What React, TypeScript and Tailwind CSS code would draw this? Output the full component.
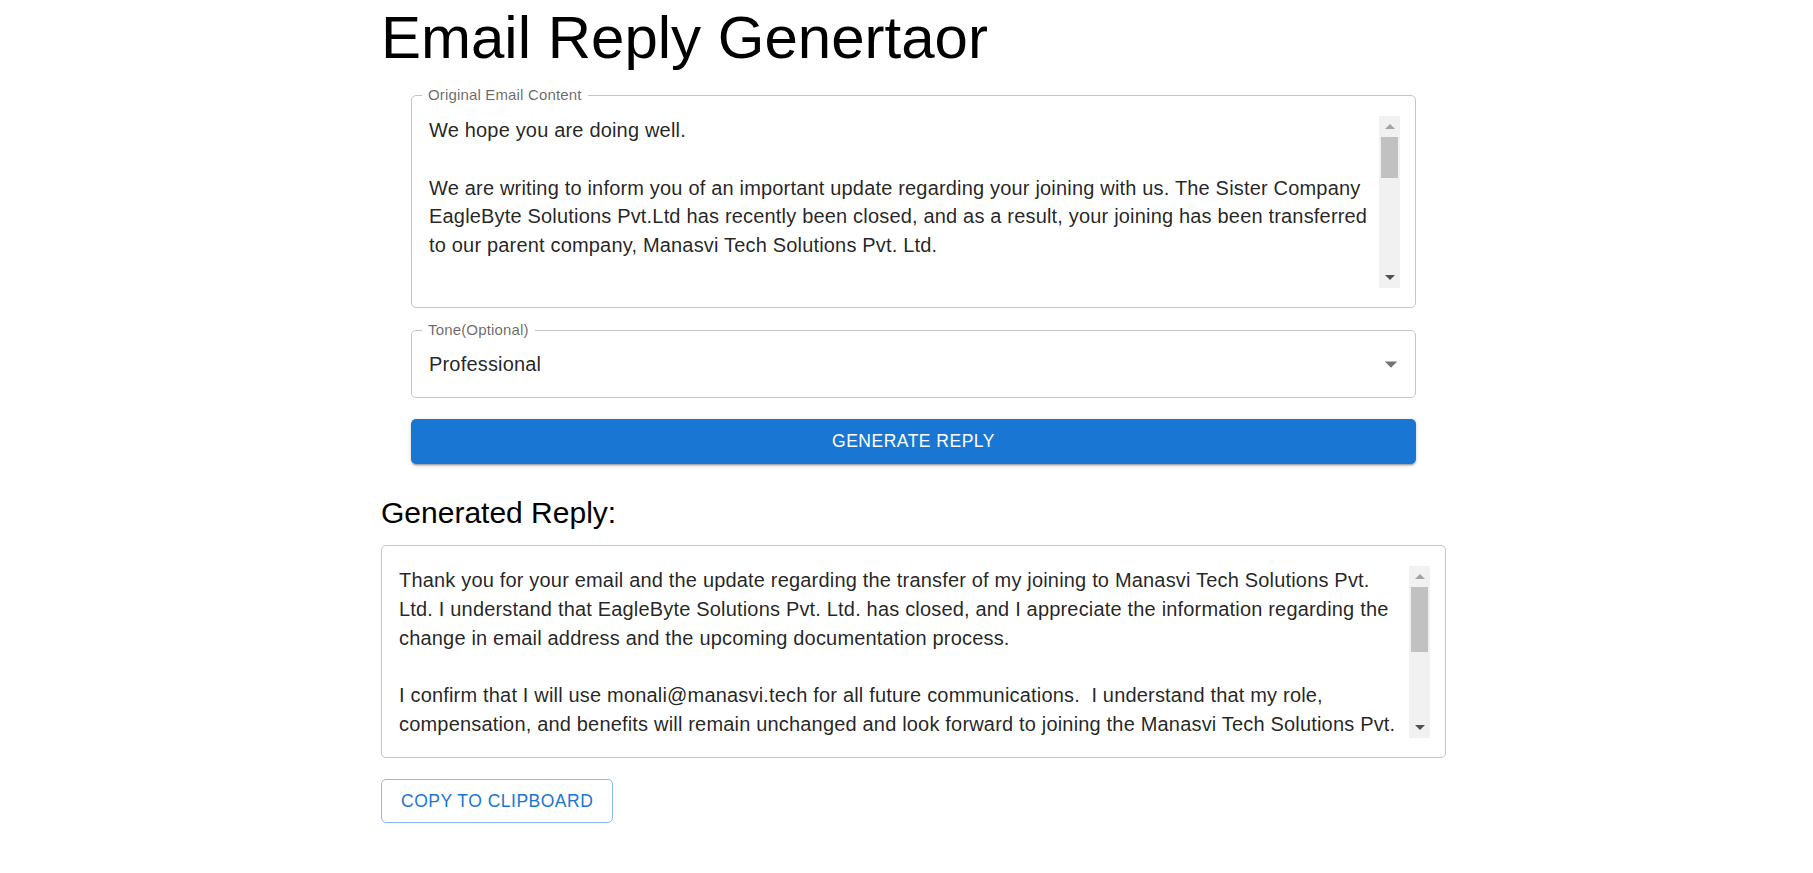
import React from "react";

function ScrollBar({ thumb }: { thumb: number }) {
  return (
    <div className="flex h-[172px] w-[21px] shrink-0 flex-col bg-[#f1f1f1]">
      <div className="flex h-[21px] items-center justify-center">
        <svg width="10" height="5" viewBox="0 0 10 5">
          <polygon points="0,5 5,0 10,5" fill="#a3a3a3" />
        </svg>
      </div>
      <div className="mx-[2px] bg-[#c1c1c1]" style={{ height: thumb }} />
      <div className="flex-1" />
      <div className="flex h-[21px] items-center justify-center">
        <svg width="10" height="5" viewBox="0 0 10 5">
          <polygon points="0,0 10,0 5,5" fill="#505050" />
        </svg>
      </div>
    </div>
  );
}

function FieldLabel({ text }: { text: string }) {
  return (
    <span className="absolute left-[10px] top-[-10px] bg-white px-[6px] text-[15px] leading-[18px] tracking-[0.16px] text-[rgba(0,0,0,0.6)]">
      {text}
    </span>
  );
}

function TextBox({
  lines,
  label,
  thumb,
}: {
  lines: string[];
  label?: string;
  thumb: number;
}) {
  return (
    <div className="relative flex h-[213px] rounded-[5px] border border-[#c4c4c4] pb-[19px] pl-[17px] pr-[15px] pt-[20px]">
      {label && <FieldLabel text={label} />}
      <div className="h-[172px] flex-1 overflow-hidden text-[20px] leading-[28.75px] tracking-[0.18px] text-[rgba(0,0,0,0.87)]">
        {lines.map((l, i) => (
          <div key={i} className="h-[28.75px] whitespace-pre">
            {l}
          </div>
        ))}
      </div>
      <ScrollBar thumb={thumb} />
    </div>
  );
}

export default function App() {
  const original = [
    "We hope you are doing well.",
    "",
    "We are writing to inform you of an important update regarding your joining with us. The Sister Company",
    "EagleByte Solutions Pvt.Ltd has recently been closed, and as a result, your joining has been transferred",
    "to our parent company, Manasvi Tech Solutions Pvt. Ltd.",
    "",
  ];
  const reply = [
    "Thank you for your email and the update regarding the transfer of my joining to Manasvi Tech Solutions Pvt.",
    "Ltd. I understand that EagleByte Solutions Pvt. Ltd. has closed, and I appreciate the information regarding the",
    "change in email address and the upcoming documentation process.",
    "",
    "I confirm that I will use monali@manasvi.tech for all future communications.  I understand that my role,",
    "compensation, and benefits will remain unchanged and look forward to joining the Manasvi Tech Solutions Pvt.",
  ];
  return (
    <div className="min-h-[873px] bg-white font-['Liberation_Sans',Arial,sans-serif]">
      <div className="ml-[381px] flex w-[1065px] flex-col pb-[40px]">
        <h1 className="mt-[3px] h-[70px] text-[60px] font-normal leading-[70px] text-black">
          Email Reply Genertaor
        </h1>
        <div className="mx-[30px] flex flex-col">
          <div className="mt-[22px]">
            <TextBox lines={original} label="Original Email Content" thumb={41} />
          </div>
          <div className="relative mt-[22px] flex h-[68px] items-center rounded-[5px] border border-[#c4c4c4] pl-[17px] pr-[9px]">
            <FieldLabel text="Tone(Optional)" />
            <span className="flex-1 text-[20px] leading-[28.75px] tracking-[0.18px] text-[rgba(0,0,0,0.87)]">
              Professional
            </span>
            <svg width="30" height="30" viewBox="0 0 24 24">
              <path d="M7 10l5 5 5-5z" fill="rgba(0,0,0,0.54)" />
            </svg>
          </div>
          <button className="mt-[21px] flex h-[45px] items-center justify-center rounded-[5px] bg-[#1976d2] text-[17.5px] uppercase tracking-[0.5px] text-white shadow-[0px_3px_1px_-2px_rgba(0,0,0,0.2),0px_2px_2px_0px_rgba(0,0,0,0.14),0px_1px_5px_0px_rgba(0,0,0,0.12)]">
            Generate Reply
          </button>
        </div>
        <h5 className="mt-[29px] h-[40px] text-[30px] font-normal leading-[40px] text-black">
          Generated Reply:
        </h5>
        <div className="mt-[12px]">
          <TextBox lines={reply} thumb={65} />
        </div>
        <div className="mt-[21px] flex">
          <button className="flex h-[44px] items-center rounded-[5px] border border-[#8cbbe9] px-[19px] text-[17.5px] uppercase tracking-[0.5px] text-[#1976d2]">
            Copy to Clipboard
          </button>
        </div>
      </div>
    </div>
  );
}
